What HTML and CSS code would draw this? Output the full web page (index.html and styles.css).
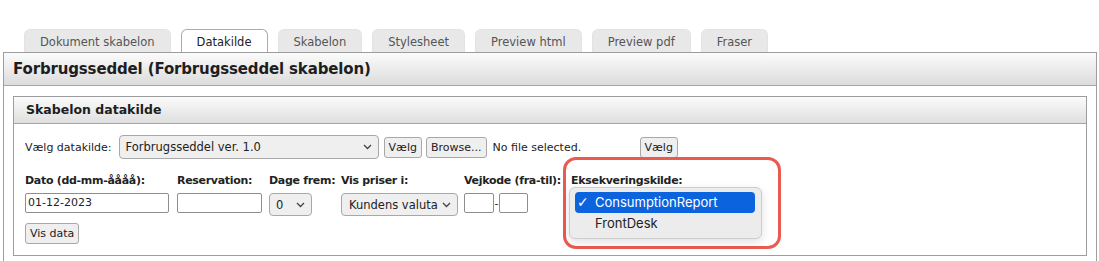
FILE: index.html
```html
<!DOCTYPE html>
<html lang="da">
<head>
<meta charset="utf-8">
<title>Forbrugsseddel</title>
<link rel="stylesheet" href="styles.css">
</head>
<body>
<div class="tabs">
  <div class="tab">Dokument skabelon</div>
  <div class="tab active">Datakilde</div>
  <div class="tab">Skabelon</div>
  <div class="tab">Stylesheet</div>
  <div class="tab">Preview html</div>
  <div class="tab">Preview pdf</div>
  <div class="tab">Fraser</div>
</div>
<div class="panel">
  <div class="panel-header">Forbrugsseddel (Forbrugsseddel skabelon)</div>
  <div class="panel-body">
    <div class="box">
      <div class="box-header">Skabelon datakilde</div>
      <div class="box-body">
        <div class="row1">
          <span class="row-label">Vælg datakilde:</span>
          <div class="select sel-source"><span>Forbrugsseddel ver. 1.0</span><svg class="chev" width="9" height="6" viewBox="0 0 9 6"><path d="M1 1 L4.5 4.5 L8 1" fill="none" stroke="#444" stroke-width="1.3"/></svg></div>
          <button class="btn btn-choose">Vælg</button>
          <button class="btn btn-browse">Browse...</button>
          <span class="file-status">No file selected.</span>
          <button class="btn btn-choose2">Vælg</button>
        </div>
        <div class="fields">
          <div class="field">
            <span class="field-label">Dato (dd-mm-åååå):</span>
            <div class="input in-date">01-12-2023</div>
          </div>
          <div class="field">
            <span class="field-label">Reservation:</span>
            <div class="input in-res"></div>
          </div>
          <div class="field">
            <span class="field-label">Dage frem:</span>
            <div class="select sel-days"><span>0</span><svg class="chev" width="9" height="6" viewBox="0 0 9 6"><path d="M1 1 L4.5 4.5 L8 1" fill="none" stroke="#444" stroke-width="1.3"/></svg></div>
          </div>
          <div class="field">
            <span class="field-label">Vis priser i:</span>
            <div class="select sel-currency"><span>Kundens valuta</span><svg class="chev" width="9" height="6" viewBox="0 0 9 6"><path d="M1 1 L4.5 4.5 L8 1" fill="none" stroke="#444" stroke-width="1.3"/></svg></div>
          </div>
          <div class="field">
            <span class="field-label">Vejkode (fra-til):</span>
            <div class="range">
              <div class="input in-road1"></div>
              <span class="dash">-</span>
              <div class="input in-road2"></div>
            </div>
          </div>
          <div class="field field-exec">
            <span class="field-label">Eksekveringskilde:</span>
            <div class="highlight-ring"></div>
            <div class="popup">
              <div class="opt selected"><span class="check">✓</span>ConsumptionReport</div>
              <div class="opt"><span class="check"></span>FrontDesk</div>
            </div>
          </div>
        </div>
        <button class="btn btn-show">Vis data</button>
      </div>
    </div>
  </div>
</div>
</body>
</html>
```
FILE: styles.css
```css
* { box-sizing: border-box; }

body {
  margin: 0;
  font-family: "DejaVu Sans", Verdana, sans-serif;
  font-size: 11px;
  color: #222;
  background: #fff;
}

/* Tabs */
.tabs {
  display: flex;
  gap: 10px;
  margin: 29px 0 0 24px;
  height: 23px;
}
.tab {
  height: 23px;
  padding: 5px 15px 0;
  font-size: 11.5px;
  line-height: 15px;
  color: #555;
  background: #e8e8e8;
  border: 1px solid #e3e3e3;
  border-bottom: none;
  border-radius: 6px 6px 0 0;
  white-space: nowrap;
}
.tab.active {
  background: #fff;
  border-color: #ababab;
  color: #222;
}

/* Outer panel */
.panel {
  margin-left: 3px;
  width: 1094px;
  border: 1px solid #9d9d9d;
  border-bottom: none;
}
.panel-header {
  height: 33px;
  padding-left: 9px;
  background: linear-gradient(#fbfbfb, #dcdcdc);
  border-bottom: 1px solid #a5a5a5;
  font-size: 15px;
  font-weight: bold;
  letter-spacing: -0.15px;
  line-height: 32px;
  color: #1e1e1e;
}
.panel-body {
  padding: 10px 9px 20px;
}

/* Inner box */
.box {
  border: 1px solid #9d9d9d;
}
.box-header {
  height: 27px;
  padding-left: 12px;
  background: linear-gradient(#fbfbfb, #dfdfdf);
  border-bottom: 1px solid #a5a5a5;
  font-size: 12.5px;
  font-weight: bold;
  line-height: 26px;
  color: #1e1e1e;
}
.box-body {
  padding: 11px 11px 11px;
}

/* Row 1 */
.row1 {
  display: flex;
  align-items: center;
  height: 24px;
}
.row-label { white-space: nowrap; }
.sel-source {
  margin-left: 7px;
  width: 260px;
  height: 24px;
}
.btn-choose { margin-left: 5px; }
.btn-browse { margin-left: 4px; padding: 0 5px; }
.file-status {
  margin-left: 6px;
  width: 147px;
  white-space: nowrap;
}
.btn-choose2 { height: 20px; line-height: 18px; }

/* Controls */
.btn {
  display: block;
  height: 21px;
  padding: 0 4px;
  font-family: inherit;
  font-size: 11px;
  line-height: 19px;
  color: #222;
  background: #efefef;
  border: 1px solid #a8a8a8;
  border-radius: 3px;
}
.select {
  display: flex;
  align-items: center;
  justify-content: space-between;
  padding: 0 6px;
  font-size: 11.5px;
  background: #efefef;
  border: 1px solid #a8a8a8;
  border-radius: 4px;
  white-space: nowrap;
}
.chev { flex: none; }
.input {
  height: 20px;
  padding: 0 2px;
  line-height: 18px;
  background: #fff;
  border: 1px solid #8e8e8e;
  border-radius: 2px;
}

/* Fields row */
.fields {
  display: grid;
  grid-template-columns: 152px 92px 72px 123px 107px 1fr;
  margin-top: 15px;
}
.field {
  display: flex;
  flex-direction: column;
  align-items: flex-start;
}
.field-label {
  height: 14px;
  margin-bottom: 5px;
  font-weight: bold;
  letter-spacing: -0.3px;
  line-height: 14px;
  white-space: nowrap;
}
.in-date { width: 144px; }
.in-res { width: 85px; }
.sel-days { width: 43px; height: 23px; }
.sel-currency { width: 117px; height: 23px; padding-left: 7px; }
.range {
  display: flex;
  align-items: center;
}
.in-road1 { width: 30px; }
.in-road2 { width: 29px; }
.dash { width: 5px; text-align: center; }
.btn-show { margin-top: 7px; }

/* Execution source with open menu */
.field-exec { position: relative; }
.highlight-ring {
  position: absolute;
  left: -8px;
  top: -17px;
  width: 218px;
  height: 92px;
  border: 3px solid #ea5a4f;
  border-radius: 13px;
}
.popup {
  position: absolute;
  left: -2px;
  top: 13px;
  width: 193px;
  height: 52px;
  padding: 4px 6px 4px 5px;
  background: #ececec;
  border: 1px solid #cdcdcd;
  border-radius: 6px;
  box-shadow: 0 3px 10px rgba(0, 0, 0, 0.13);
  font-family: Inter, "Liberation Sans", sans-serif;
  font-size: 13px;
  color: #222;
}
.opt {
  height: 21px;
  padding-left: 2px;
  line-height: 21px;
  white-space: nowrap;
  border-radius: 4px;
}
.opt.selected {
  background: #0b63de;
  color: #fff;
}
.check {
  display: inline-block;
  width: 18px;
  font-family: "DejaVu Sans", sans-serif;
  font-size: 14px;
}
```
